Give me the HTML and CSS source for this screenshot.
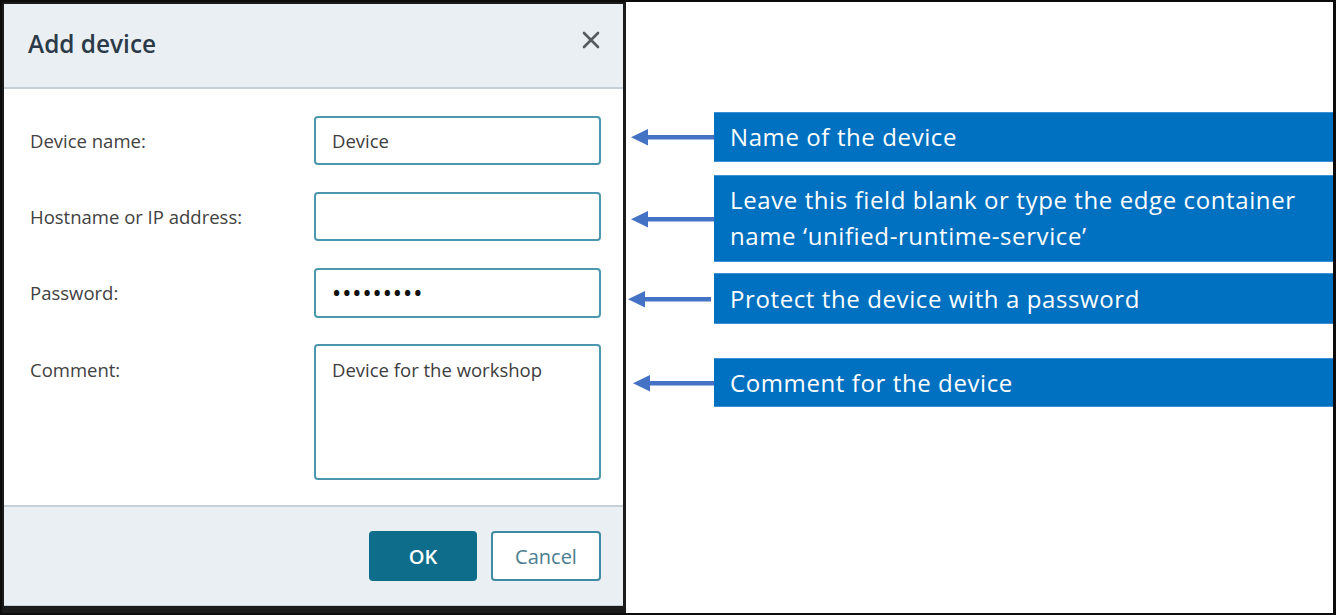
FILE: index.html
```html
<!DOCTYPE html>
<html lang="en">
<head>
<meta charset="utf-8">
<title>Add device</title>
<link rel="stylesheet" href="styles.css">
</head>
<body>
<div class="frame">
  <div class="dialog">
    <div class="dlg-header">
      <h1 class="dlg-title">Add device</h1>
      <span class="dlg-close" aria-label="Close">
        <svg width="18" height="18" viewBox="0 0 18 18"><path d="M2 2 L16 16 M16 2 L2 16" stroke="#555a5e" stroke-width="2.6" stroke-linecap="round" fill="none"/></svg>
      </span>
    </div>
    <div class="dlg-body">
      <div class="row">
        <div class="label">Device name:</div>
        <div class="field">Device</div>
      </div>
      <div class="row">
        <div class="label">Hostname or IP address:</div>
        <div class="field"></div>
      </div>
      <div class="row row-pw">
        <div class="label">Password:</div>
        <div class="field field-pw">•••••••••</div>
      </div>
      <div class="row row-area">
        <div class="label">Comment:</div>
        <div class="field field-area">Device for the workshop</div>
      </div>
    </div>
    <div class="dlg-footer">
      <span class="btn btn-primary">OK</span>
      <span class="btn btn-secondary">Cancel</span>
    </div>
  </div>
  <div class="notes">
    <div class="note note-1">
      <svg class="arrow" width="84" height="18" viewBox="0 0 84 18"><rect x="14" y="7" width="70" height="4.5" fill="#4472c4"/><polygon points="1,9.2 18,1 18,17.4" fill="#4472c4"/></svg>
      <div class="box">Name of the device</div>
    </div>
    <div class="note note-2">
      <svg class="arrow" width="84" height="18" viewBox="0 0 84 18"><rect x="14" y="7" width="70" height="4.5" fill="#4472c4"/><polygon points="1,9.2 18,1 18,17.4" fill="#4472c4"/></svg>
      <div class="box">Leave this field blank or type the edge container<br>name ‘unified-runtime-service’</div>
    </div>
    <div class="note note-3">
      <svg class="arrow" width="84" height="18" viewBox="0 0 84 18"><rect x="14" y="7" width="70" height="4.5" fill="#4472c4"/><polygon points="1,9.2 18,1 18,17.4" fill="#4472c4"/></svg>
      <div class="box">Protect the device with a password</div>
    </div>
    <div class="note note-4">
      <svg class="arrow" width="84" height="18" viewBox="0 0 84 18"><rect x="14" y="7" width="70" height="4.5" fill="#4472c4"/><polygon points="1,9.2 18,1 18,17.4" fill="#4472c4"/></svg>
      <div class="box">Comment for the device</div>
    </div>
  </div>
</div>
</body>
</html>
```
FILE: styles.css
```css
* { box-sizing: border-box; }
html, body { margin: 0; padding: 0; background: #ffffff; }

.frame {
  width: 1336px;
  height: 615px;
  border: 2px solid #0c0c0c;
  border-right-width: 3px;
  display: flex;
  background: #ffffff;
  overflow: hidden;
}

/* ---------- dialog ---------- */
.dialog {
  width: 624px;
  flex: 0 0 624px;
  height: 611px;
  display: flex;
  flex-direction: column;
  border-style: solid;
  border-color: #1b1b1b;
  border-width: 2px 3px 7px 2px;
  font-family: "Open Sans", "Noto Sans", sans-serif;
  background: #ffffff;
}

.dlg-header {
  height: 85px;
  flex: 0 0 85px;
  background: #eaeff4;
  border-bottom: 2px solid #c6d0d9;
  display: flex;
  align-items: center;
  justify-content: space-between;
  padding: 0 22px 0 24px;
}
.dlg-title {
  margin: 0;
  font-size: 24.4px;
  font-weight: 600;
  color: #2b3a47;
  line-height: 1;
  padding-bottom: 2px;
}
.dlg-close {
  display: flex;
  width: 18px;
  height: 18px;
  margin-top: -11px;
  margin-right: 1px;
}

.dlg-body {
  flex: 1 1 auto;
  padding: 27px 22px 25px 26px;
  display: flex;
  flex-direction: column;
  gap: 27px;
}
.row {
  display: flex;
  align-items: center;
}
.row-pw { margin-bottom: -1px; }
.row-area { align-items: flex-start; }
.label {
  width: 284px;
  flex: 0 0 284px;
  font-size: 18.5px;
  color: #414141;
  line-height: 24px;
}
.row-area .label { padding-top: 14px; }
.field {
  flex: 1 1 auto;
  height: 49px;
  border: 2px solid #4b97ad;
  border-radius: 4px;
  padding: 0 16px;
  display: flex;
  align-items: center;
  font-size: 18.5px;
  color: #3d3d3d;
}
.field-pw {
  height: 50px;
  color: #111;
  letter-spacing: 3px;
  font-size: 19px;
  font-weight: 700;
  padding-left: 17px;
}
.field-area {
  height: 136px;
  align-items: flex-start;
  padding-top: 12px;
  line-height: 24px;
}

.dlg-footer {
  height: 101px;
  flex: 0 0 101px;
  background: #eaeff4;
  border-top: 2px solid #c6d0d9;
  border-bottom: 1px solid #c6d0d9;
  display: flex;
  justify-content: flex-end;
  align-items: center;
  gap: 14px;
  padding: 0 22px;
}
.btn {
  height: 50px;
  border-radius: 4px;
  display: flex;
  align-items: center;
  justify-content: center;
  font-size: 20px;
}
.btn-primary {
  width: 108px;
  background: #0f6d8c;
  color: #ffffff;
  font-weight: 600;
}
.btn-secondary {
  width: 110px;
  background: #ffffff;
  border: 2px solid #3f8ba4;
  color: #4b7d90;
}

/* ---------- annotations ---------- */
.notes {
  flex: 1 1 auto;
  display: flex;
  flex-direction: column;
  font-family: "Open Sans", "Noto Sans", sans-serif;
}
.note {
  display: flex;
  align-items: center;
}
.arrow {
  flex: 0 0 84px;
  margin-left: 4px;
}
.box {
  flex: 1 1 auto;
  background: #0070c0;
  color: #ffffff;
  font-size: 24px;
  letter-spacing: 0.6px;
  line-height: 36px;
  padding-left: 16px;
  display: flex;
  align-items: center;
  border-top: 1px solid #3f8fd6;
  border-bottom: 1px solid #3f8fd6;
  white-space: nowrap;
}
.note-1 { margin-top: 110px; }
.note-1 .box { height: 50px; }
.note-2 { margin-top: 13px; }
.note-2 .box { height: 87px; display: block; padding-top: 6px; }
.note-3 { margin-top: 11px; }
.note-3 .box { height: 51px; }
.note-3 .arrow { margin-left: 1px; margin-right: 3px; }
.note-4 { margin-top: 34px; }
.note-4 .box { height: 49px; }
.note-4 .arrow { margin-left: 6px; margin-right: -2px; }
```
